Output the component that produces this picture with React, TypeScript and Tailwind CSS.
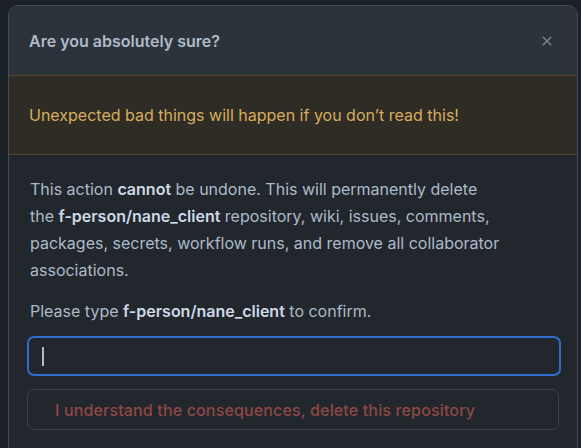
import React from 'react';

const font = { fontFamily: 'Inter, "Liberation Sans", sans-serif' };

const CloseIcon = () => (
  <svg width="16" height="16" viewBox="0 0 16 16" fill="currentColor">
    <path d="M3.72 3.72a.75.75 0 0 1 1.06 0L8 6.94l3.22-3.22a.749.749 0 0 1 1.275.326.749.749 0 0 1-.215.734L9.06 8l3.22 3.22a.749.749 0 0 1-.326 1.275.749.749 0 0 1-.734-.215L8 9.06l-3.22 3.22a.751.751 0 0 1-1.042-.018.751.751 0 0 1-.018-1.042L6.94 8 3.72 4.78a.75.75 0 0 1 0-1.06Z" />
  </svg>
);

export default function App() {
  return (
    <div className="h-[448px] w-[581px] overflow-hidden bg-[#1c2128] pl-2 pr-[3px] pt-[5px]" style={font}>
      <div className="h-[460px] rounded-t-[10px] border border-[#444c56] bg-[#22272e] overflow-hidden">
        <header className="flex h-[69px] items-center justify-between bg-[#2d333b] pl-[20px] pr-[22px]">
          <h1 className="text-[16px] font-semibold text-[#adbac7]">Are you absolutely sure?</h1>
          <button className="text-[#768390]" aria-label="Close">
            <CloseIcon />
          </button>
        </header>
        <div className="flex h-[80px] items-center border-y border-[#544627] bg-[#2e2c24] pl-[20px] text-[16px] text-[#d6ad5e]">
          Unexpected bad things will happen if you don’t read this!
        </div>
        <div className="px-[18px] pt-[21px] text-[16px] text-[#adbac7]">
          <p className="w-[480px] px-[3px] leading-[27px]">
            This action <strong className="font-semibold text-[#cdd9e5]">cannot</strong> be undone. This will permanently delete the{' '}
            <strong className="font-semibold text-[#cdd9e5]">f-person/nane_client</strong> repository, wiki, issues, comments, packages, secrets, workflow runs, and remove all collaborator associations.
          </p>
          <p className="mt-[14px] px-[3px] leading-[27px]">
            Please type <strong className="font-semibold text-[#cdd9e5]">f-person/nane_client</strong> to confirm.
          </p>
          <div className="relative mt-[11px] w-[534px]">
            <input className="block h-[40px] w-full rounded-[7px] border-2 border-[#316dca] bg-[#22272e] px-[14px] text-[#adbac7] outline-none" />
            <span className="absolute left-[15px] top-[11px] h-[19px] w-[1.5px] bg-[#adbac7]" />
          </div>
          <button
            disabled
            className="mt-[13px] flex h-[41px] w-[532px] items-center rounded-[7px] border border-[#3b424b] bg-[#22272e] pl-[27px] text-[16px] font-medium tracking-[0.15px] text-[#8f4744]"
          >
            I understand the consequences, delete this repository
          </button>
        </div>
      </div>
    </div>
  );
}
